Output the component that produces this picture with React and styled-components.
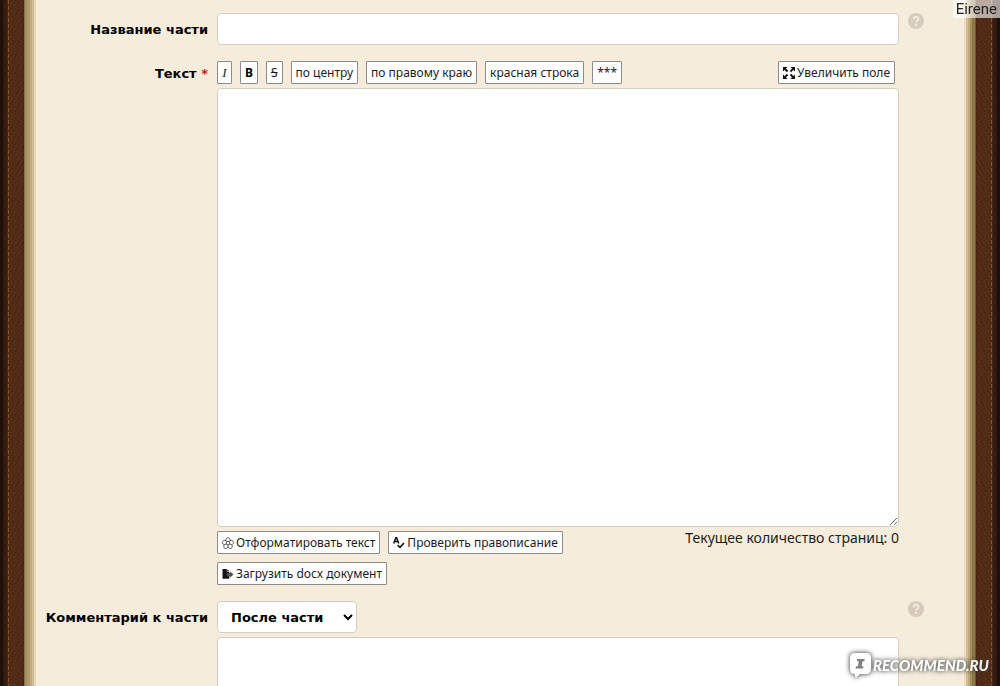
import styled, { createGlobalStyle, css } from 'styled-components'

const paper = '#f5ecdc'
const borderColor = '#d3cfc5'
const buttonBorder = '#8c8c8c'
const ink = '#1c1c1c'

const GlobalStyle = createGlobalStyle`
  * {
    box-sizing: border-box;
  }

  body {
    margin: 0;
    overflow: hidden;
    background: ${paper};
    color: ${ink};
    font: 13px/18px Verdana, 'DejaVu Sans', sans-serif;
  }
`

const Book = styled.div`
  display: flex;
  height: 100vh;
  overflow: hidden;
`

const Leather = styled.div`
  flex: 0 0 24px;
  transform: ${props => (props.$right ? 'scaleX(-1)' : 'none')};
  background:
    linear-gradient(to right, #1f100c 0 3px, #2c150d 3px 4px, transparent 4px),
    repeating-linear-gradient(to bottom, #87542e 0 4px, transparent 4px 6px) 8px 0 / 1px 100% no-repeat,
    repeating-linear-gradient(38deg, rgba(20, 6, 0, 0.16) 0 1px, transparent 1px 3px),
    repeating-linear-gradient(-60deg, rgba(140, 80, 40, 0.16) 0 1px, transparent 1px 4px),
    linear-gradient(to right, #381b10 4px 7px, #532c18 8px 22px, #472513 24px);
`

const leftEdge = css`
  flex-basis: 12px;
  background: linear-gradient(
    to right,
    #85714d 0 1px, #a58d61 1px 3px, #b29a6d 3px 6px, #c2ab7e 6px 8px,
    #d3be95 8px 10px, #e8d8b8 10px 12px
  );
`

const rightEdge = css`
  flex-basis: 12px;
  background: linear-gradient(
    to left,
    #6c5a2d 0 1px, #8b7846 1px 4px, #a38f5e 4px 6px, #bda97a 6px 8px,
    #d2bf94 8px 10px, #eadcbd 10px 12px
  );
`

const PageEdge = styled.div`
  flex-grow: 0;
  flex-shrink: 0;
  ${props => (props.$right ? rightEdge : leftEdge)}
`

const Form = styled.form`
  flex: 1;
  min-width: 0;
  display: flex;
  flex-direction: column;
  gap: 16px;
  padding: 13px 40px 0 0;
`

const Row = styled.div`
  flex-shrink: 0;
  display: grid;
  grid-template-columns: 172px minmax(0, 1fr) 16px;
  column-gap: 9px;
`

const Label = styled.label`
  padding-top: ${props => (props.$compact ? 4 : 8)}px;
  text-align: right;
  font-weight: bold;
  color: #000;
`

const Required = styled.span`
  color: #d8141c;
`

const Field = styled.div`
  display: flex;
  flex-direction: column;
  align-items: flex-start;
  gap: 4px;
`

const control = css`
  border: 1px solid ${borderColor};
  border-radius: 4px;
  background: #fff;
  color: #000;
  font: inherit;
  outline: none;
`

const TextInput = styled.input`
  ${control}
  width: 100%;
  height: 32px;
  padding: 0 8px;
`

const TextArea = styled.textarea`
  ${control}
  display: block;
  width: 100%;
  height: ${props => props.$height}px;
  padding: 8px;
  resize: vertical;
`

const Select = styled.select`
  ${control}
  width: 140px;
  height: 32px;
  padding: 0 0 0 9px;
  font-weight: bold;
`

const Toolbar = styled.div`
  display: flex;
  flex-wrap: wrap;
  gap: 8px;
  ${props => props.$full && css`
    width: 100%;
    padding-right: 4px;
  `}
`

const Button = styled.button`
  display: flex;
  align-items: center;
  justify-content: center;
  gap: 2px;
  min-width: 15px;
  height: 23px;
  padding: 0 4px;
  border: 1px solid ${buttonBorder};
  border-radius: 1px;
  background: #fff;
  color: ${ink};
  font: 12px/16px 'Noto Sans', sans-serif;
  white-space: nowrap;
  cursor: pointer;

  b {
    color: #000;
  }

  i {
    font-family: 'Liberation Serif', serif;
    font-size: 13px;
  }
`

const ExpandButton = styled(Button)`
  margin-left: auto;
`

const DocumentTools = styled.div`
  display: flex;
  flex-direction: column;
  align-items: flex-start;
  gap: 8px;
`

const Footer = styled.div`
  display: flex;
  justify-content: space-between;
  width: 100%;
`

const PageCount = styled.div`
  flex-shrink: 0;
  font-family: 'Noto Sans', sans-serif;
  font-size: 14px;
  line-height: 14px;
`

const HelpButton = styled.button`
  align-self: start;
  display: flex;
  width: 16px;
  height: 16px;
  padding: 0;
  border: 0;
  background: none;
  cursor: pointer;
`

const Icon = styled.svg`
  flex: none;
  display: block;
`

const UserBadge = styled.div`
  position: fixed;
  top: 0;
  right: 0;
  padding: 0 3px;
  background: rgba(255, 255, 255, 0.6);
  color: #222;
  font: 15px/18px Roboto, sans-serif;
`

const Watermark = styled.div`
  position: fixed;
  right: 11px;
  bottom: 6px;
  display: flex;
  align-items: center;
  gap: 1px;
  color: #fff;
  font: italic 900 15px/30px Lato, sans-serif;
  opacity: 0.92;
  filter: drop-shadow(0 0 2px rgba(60, 60, 60, 0.8)) drop-shadow(0 0 2px rgba(60, 60, 60, 0.5));
`

const HelpIcon = () => (
  <Icon width='16' height='16' viewBox='0 0 16 16'>
    <circle cx='8' cy='8' r='8' fill='#d6cbbd' />
    <path
      d='M5.6 6.2C5.7 4.6 6.7 3.8 8.1 3.8s2.4.8 2.4 2c0 1.7-2.3 1.7-2.3 3.5'
      fill='none'
      stroke='#f5ecdc'
      strokeWidth='1.8'
    />
    <circle cx='8.1' cy='11.7' r='1.2' fill='#f5ecdc' />
  </Icon>
)

const ExpandIcon = () => (
  <Icon width='12' height='12' viewBox='0 0 12 12' fill='#111' stroke='#111' strokeWidth='1.8'>
    <path d='M2 2l2.5 2.5M10 2L7.5 4.5M2 10l2.5-2.5M10 10L7.5 7.5' />
    <path d='M0 0h4.6L0 4.6zM12 0v4.6L7.4 0zM0 12V7.4L4.6 12zM12 12H7.4L12 7.4z' stroke='none' />
  </Icon>
)

const FlowerIcon = () => (
  <Icon width='12' height='12' viewBox='0 0 12 12' fill='none' stroke='#333' strokeWidth='0.8'>
    <path d='M4 3.6C3.6-.4 8.4-.4 8 3.6c3.7-1.1 5 3 1.7 4.1 2 3.2-1.6 5.3-3.7 2.4-2.1 2.9-5.7.8-3.7-2.4C-1 6.6.3 2.5 4 3.6z' />
    <path d='M6 4.2l1.9 1.4-.7 2.2H4.8l-.7-2.2zM4 3.6l.9 1.2M8 3.6l-.9 1.2M9.7 7.7l-2-.7M2.3 7.7l2-.7M6 10.1V8' />
  </Icon>
)

const SpellIcon = () => (
  <Icon width='12' height='12' viewBox='0 0 12 12' fill='none' stroke='#111'>
    <path d='M.7 6.4L2.8.8h.8l2.1 5.6M1.5 4.6h3.4' strokeWidth='1.5' />
    <path d='M4.6 8.2l2.4 2.2L11 6' strokeWidth='1.6' />
  </Icon>
)

const DocumentIcon = () => (
  <Icon width='12' height='12' viewBox='0 0 12 12' fill='#151515'>
    <path d='M.5 1h4.3v2.8h2.5v7H.5z' />
    <path d='M5.3 1.2l2.1 2.1H5.3z' />
    <path d='M4.8 5h3.4V3.6l3.3 2.9-3.3 2.9V8.2H4.8z' fill='#505050' />
  </Icon>
)

const BubbleIcon = () => (
  <Icon width='23' height='26' viewBox='0 0 23 26'>
    <path
      d='M6 1h11q5 0 5 5v11q0 5-5 5h-6l-4.5 4-.7-4Q1 22 1 17V6q0-5 5-5z'
      fill='#fff'
    />
    <path d='M8.3 7h7.4l-.4 2.3h-1.7l-1 4.9h1.8l-.4 2.3H6.6l.4-2.3h1.8l1-4.9H7.9z' fill='#777' />
  </Icon>
)

const Help = () => (
  <HelpButton type='button' aria-label='Справка'>
    <HelpIcon />
  </HelpButton>
)

const App = () => (
  <>
    <GlobalStyle />
    <Book>
      <Leather />
      <PageEdge />
      <Form>
        <Row>
          <Label htmlFor='title'>Название части</Label>
          <TextInput id='title' />
          <Help />
        </Row>
        <Row>
          <Label htmlFor='content' $compact>
            Текст <Required>*</Required>
          </Label>
          <Field>
            <Toolbar $full>
              <Button type='button'><i>I</i></Button>
              <Button type='button'><b>B</b></Button>
              <Button type='button'><s>S</s></Button>
              <Button type='button'>по центру</Button>
              <Button type='button'>по правому краю</Button>
              <Button type='button'>красная строка</Button>
              <Button type='button'>***</Button>
              <ExpandButton type='button'>
                <ExpandIcon />
                Увеличить поле
              </ExpandButton>
            </Toolbar>
            <TextArea id='content' $height={439} />
            <Footer>
              <DocumentTools>
                <Toolbar>
                  <Button type='button'>
                    <FlowerIcon />
                    Отформатировать текст
                  </Button>
                  <Button type='button'>
                    <SpellIcon />
                    Проверить правописание
                  </Button>
                </Toolbar>
                <Button type='button'>
                  <DocumentIcon />
                  Загрузить docx документ
                </Button>
              </DocumentTools>
              <PageCount>Текущее количество страниц: 0</PageCount>
            </Footer>
          </Field>
        </Row>
        <Row>
          <Label htmlFor='comment-position'>Комментарий к части</Label>
          <Field>
            <Select id='comment-position' defaultValue='after'>
              <option value='before'>До части</option>
              <option value='after'>После части</option>
            </Select>
            <TextArea $height={120} aria-label='Комментарий к части' />
          </Field>
          <Help />
        </Row>
      </Form>
      <PageEdge $right />
      <Leather $right />
    </Book>
    <UserBadge>Eirene</UserBadge>
    <Watermark>
      <BubbleIcon />
      RECOMMEND.RU
    </Watermark>
  </>
)

export default App
